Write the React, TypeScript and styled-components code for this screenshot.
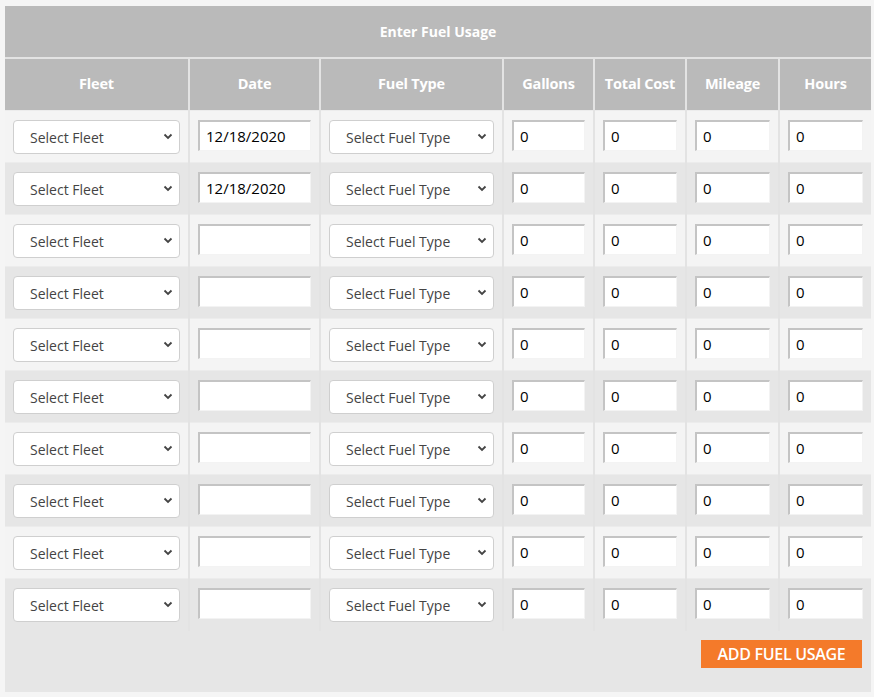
import React from "react";
import styled, { createGlobalStyle } from "styled-components";

const GlobalStyle = createGlobalStyle`
  body {
    margin: 0;
    background: #f5f5f5;
    font-family: "Open Sans", "Liberation Sans", sans-serif;
  }
`;

const columns = [
  { key: "fleet", label: "Fleet", width: 184 },
  { key: "date", label: "Date", width: 131 },
  { key: "fuel", label: "Fuel Type", width: 183 },
  { key: "gallons", label: "Gallons", width: 91 },
  { key: "cost", label: "Total Cost", width: 92 },
  { key: "mileage", label: "Mileage", width: 93 },
  { key: "hours", label: "Hours", width: 92 },
];

const rows = Array.from({ length: 10 }, (_, i) => ({
  date: i < 2 ? "12/18/2020" : "",
}));

const Chevron = () => (
  <svg width="10" height="7" viewBox="0 0 10 7">
    <path d="M1.5 1.5 L5 5 L8.5 1.5" fill="none" stroke="#444" strokeWidth="1.8" />
  </svg>
);

const FuelUsage = () => {
  return (
    <Page>
      <Panel>
        <Table>
          <colgroup>
            {columns.map((c) => (
              <col key={c.key} style={{ width: c.width }} />
            ))}
          </colgroup>
          <thead>
            <tr>
              <TitleCell colSpan={columns.length}>Enter Fuel Usage</TitleCell>
            </tr>
            <tr>
              {columns.map((c) => (
                <HeadCell key={c.key}>{c.label}</HeadCell>
              ))}
            </tr>
          </thead>
          <tbody>
            {rows.map((row, i) => (
              <Row key={i} odd={i % 2 === 1}>
                <Cell>
                  <SelectBox>
                    <span>Select Fleet</span>
                    <Chevron />
                  </SelectBox>
                </Cell>
                <Cell>
                  <TextInput defaultValue={row.date} />
                </Cell>
                <Cell>
                  <SelectBox>
                    <span>Select Fuel Type</span>
                    <Chevron />
                  </SelectBox>
                </Cell>
                <Cell>
                  <TextInput defaultValue="0" />
                </Cell>
                <Cell>
                  <TextInput defaultValue="0" />
                </Cell>
                <Cell>
                  <TextInput defaultValue="0" />
                </Cell>
                <Cell>
                  <TextInput defaultValue="0" />
                </Cell>
              </Row>
            ))}
          </tbody>
        </Table>
        <Footer>
          <AddButton>ADD FUEL USAGE</AddButton>
        </Footer>
      </Panel>
    </Page>
  );
};

export default function App() {
  return (
    <>
      <GlobalStyle />
      <FuelUsage />
    </>
  );
}

const Page = styled.div`
  padding: 6px 3px 5px 5px;
`;

const Panel = styled.div`
  width: 866px;
  background: #e6e6e6;
`;

const Table = styled.table`
  width: 866px;
  table-layout: fixed;
  border-collapse: collapse;
`;

const TitleCell = styled.th`
  height: 51px;
  padding: 0;
  background: #bababa;
  color: #fff;
  font-size: 14px;
  font-weight: 700;
  text-align: center;
  border-bottom: 2px solid #e3e3e3;
`;

const HeadCell = styled.th`
  height: 49px;
  padding: 0 0 2px 0;
  background: #bababa;
  color: #fff;
  font-size: 14.5px;
  font-weight: 700;
  letter-spacing: -0.2px;
  text-align: center;
  border-left: 2px solid #e3e3e3;
  &:first-child {
    border-left: none;
  }
`;

const Row = styled.tr<{ odd: boolean }>`
  background: ${({ odd }) => (odd ? "#e6e6e6" : "#f4f4f4")};
`;

const Cell = styled.td`
  height: 52px;
  padding: 0 8px 0 8px;
  box-sizing: border-box;
  border-left: 2px solid #e3e3e3;
  border-top: 1px solid #ececec;
  vertical-align: middle;
  &:first-child {
    border-left: none;
  }
`;

const SelectBox = styled.div`
  display: flex;
  align-items: center;
  justify-content: space-between;
  height: 34px;
  box-sizing: border-box;
  padding: 0 6px 0 16px;
  background: #fff;
  border: 1px solid #cfcfcf;
  border-radius: 4px;
  color: #444;
  font-size: 14px;
  span {
    margin-top: 1px;
  }
`;

const TextInput = styled.input`
  display: block;
  width: 100%;
  height: 31px;
  box-sizing: border-box;
  padding: 0 6px;
  margin-top: -2px;
  background: #fff;
  border-style: solid;
  border-width: 2px 1px 1px 2px;
  border-color: #c4c4c4 #f3f3f3 #f3f3f3 #c4c4c4;
  color: #000;
  font-family: "Open Sans", "Liberation Sans", sans-serif;
  font-size: 15px;
  outline: none;
`;

const Footer = styled.div`
  display: flex;
  justify-content: flex-end;
  height: 61px;
  box-sizing: border-box;
  padding: 9px 9px 0 0;
  background: #e6e6e6;
`;

const AddButton = styled.button`
  width: 161px;
  height: 28px;
  padding: 0;
  border: none;
  background: #f47a2a;
  color: #fff;
  font-family: "Open Sans", "Liberation Sans", sans-serif;
  font-size: 16px;
  font-weight: 600;
  letter-spacing: -0.3px;
`;
